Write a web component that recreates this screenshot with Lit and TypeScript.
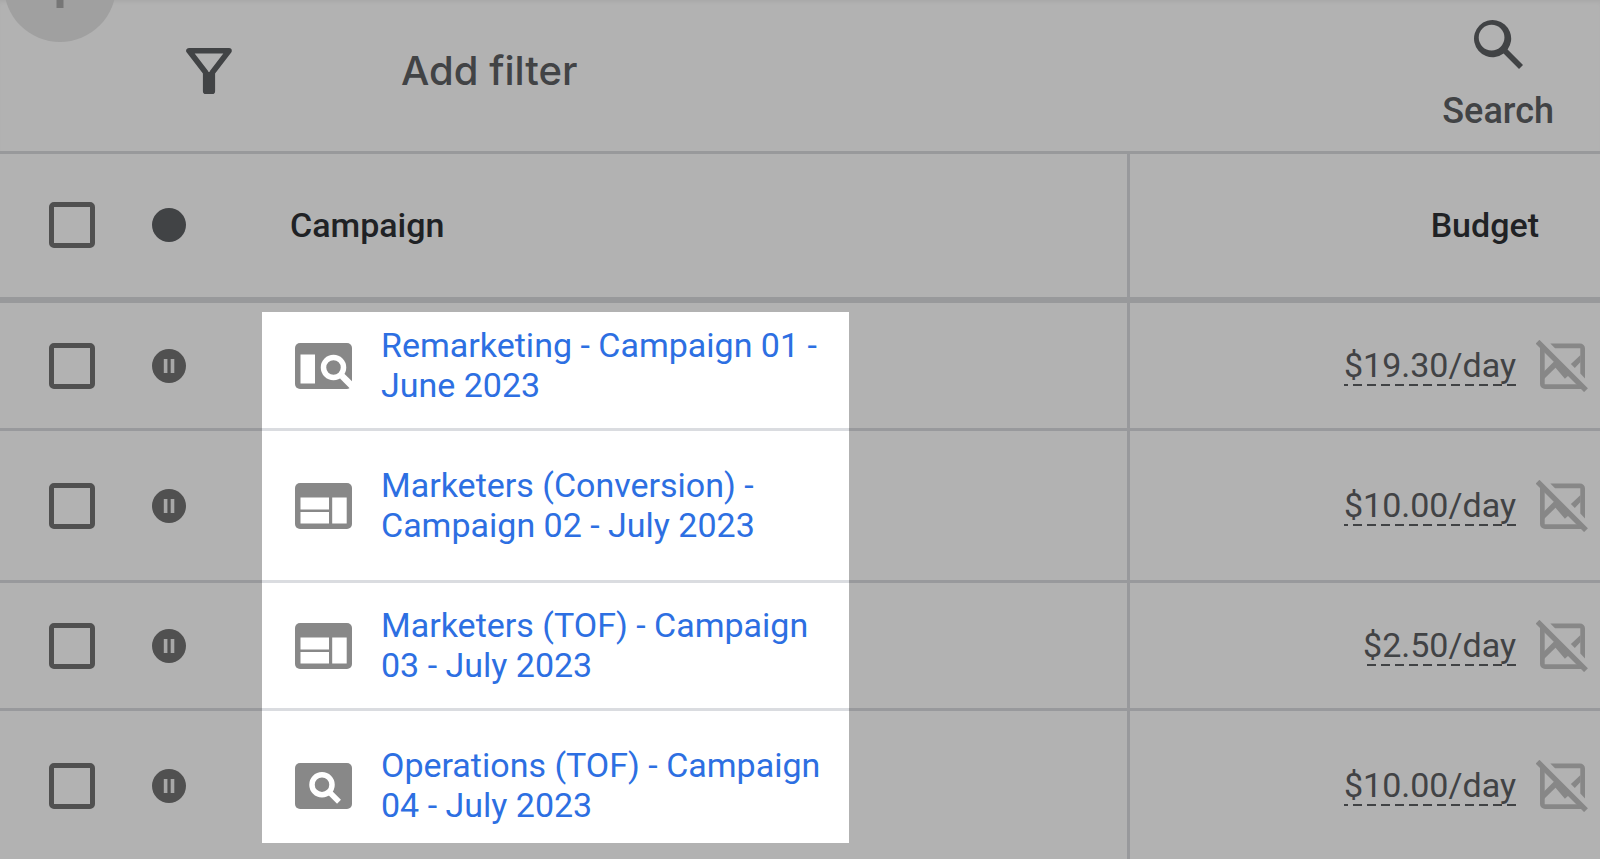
import { LitElement, html, css, svg } from "lit";
import { customElement, state } from "lit/decorators.js";
import { classMap } from "lit/directives/class-map.js";

type Kind = "audience" | "display" | "search";

interface Campaign {
  name: string;
  kind: Kind;
  budget: string;
  roomy: boolean;
}

const CAMPAIGNS: Campaign[] = [
  { name: "Remarketing - Campaign 01 - June 2023", kind: "audience", budget: "$19.30/day", roomy: false },
  { name: "Marketers (Conversion) - Campaign 02 - July 2023", kind: "display", budget: "$10.00/day", roomy: true },
  { name: "Marketers (TOF) - Campaign 03 - July 2023", kind: "display", budget: "$2.50/day", roomy: false },
  { name: "Operations (TOF) - Campaign 04 - July 2023", kind: "search", budget: "$10.00/day", roomy: true },
];

const KIND_ART = {
  audience: svg`
    <rect x="5.5" y="11.5" width="14.5" height="29" fill="#fff"/>
    <circle cx="38.5" cy="24.5" r="10" fill="none" stroke="#fff" stroke-width="5.5"/>
    <path d="M49.3 30.8 57 38.3V46h-1.6L45 35.6z" fill="#fff"/>`,
  display: svg`
    <path d="M5.5 14.6H34v11.8H5.5zM5.5 29H34v11.5H5.5zM37.2 14.6h14.5v25.9H37.2z" fill="#fff"/>`,
  search: svg`
    <circle cx="27" cy="21.7" r="10" fill="none" stroke="#fff" stroke-width="5.5"/>
    <path d="M34.5 29.2 44 38.7" stroke="#fff" stroke-width="5.5"/>`,
};

@customElement("app-root")
export class AppRoot extends LitElement {
  @state() private selected = new Set<number>();

  static styles = css`
    :host {
      display: block;
      position: relative;
      height: 100vh;
      overflow: hidden;
      background: #fff;
      color: #5e6064;
      font-family: Roboto, sans-serif;
      font-size: 34px;
      line-height: 40px;
    }
    button {
      border: 0;
      padding: 0;
      background: none;
      color: inherit;
      font: inherit;
      cursor: pointer;
    }
    svg {
      display: block;
    }
    .toolbar {
      display: flex;
      align-items: center;
      box-sizing: border-box;
      height: 154px;
      padding: 0 46px 10px 186px;
      border-bottom: 3px solid #dadcde;
      box-shadow: inset 0 4px 4px -2px rgba(0, 0, 0, 0.06);
    }
    .filter-field {
      margin-left: 169px;
      font-family: Inter, Roboto, sans-serif;
      font-size: 40px;
      font-weight: 500;
    }
    .search {
      display: flex;
      flex-direction: column;
      align-items: center;
      gap: 22px;
      padding-top: 8px;
      margin-left: auto;
      font-size: 36px;
      font-weight: 500;
    }
    .create {
      position: absolute;
      top: -70px;
      left: 4px;
      display: grid;
      place-items: center;
      width: 112px;
      height: 112px;
      border-radius: 50%;
      background: #e5e5e5;
      color: #aaa;
    }
    table {
      width: 100%;
      table-layout: fixed;
      border-collapse: separate;
      border-spacing: 0;
    }
    .col-check {
      width: 144px;
    }
    .col-status {
      width: 50px;
    }
    .col-budget {
      width: 473px;
    }
    th,
    td {
      box-sizing: border-box;
      padding: 0;
      border-bottom: 3px solid #dadce0;
      text-align: left;
      vertical-align: middle;
    }
    th {
      height: 149px;
      padding-bottom: 2px;
      border-bottom: 6px solid #dadcde;
      color: #2f3236;
      font-weight: 500;
    }
    td {
      height: 128px;
    }
    .roomy td {
      height: 152px;
    }
    .check {
      display: block;
      appearance: none;
      box-sizing: border-box;
      width: 46px;
      height: 46px;
      margin: 0 auto;
      border: 5px solid #737373;
      border-radius: 5px;
    }
    .check:checked {
      background: #1a73e8;
      border-color: #1a73e8;
    }
    .status svg {
      margin: 0 auto;
    }
    .name-head {
      padding-left: 96px;
    }
    .name {
      display: grid;
      grid-template-columns: 57px minmax(0, 450px);
      align-items: center;
      column-gap: 29px;
      padding-left: 101px;
    }
    .name a {
      padding-bottom: 2px;
      color: #2d6fe2;
      text-decoration: none;
    }
    .budget-cell {
      border-left: 3px solid #dadce0;
    }
    .budget-head {
      padding-right: 61px;
      text-align: right;
    }
    .budget {
      display: flex;
      align-items: center;
      justify-content: flex-end;
      gap: 20px;
      padding-right: 12px;
    }
    .amount {
      padding-bottom: 2px;
      background: repeating-linear-gradient(to left, #5e6064 0 9px, transparent 9px 14px) bottom 1px left / 100% 2px no-repeat;
    }
    .spotlight {
      position: absolute;
      top: 312px;
      left: 262px;
      width: 587px;
      height: 531px;
      box-shadow: 0 0 0 4000px rgba(0, 0, 0, 0.3);
      pointer-events: none;
    }
  `;

  private toggle(index: number) {
    const next = new Set(this.selected);
    next.has(index) ? next.delete(index) : next.add(index);
    this.selected = next;
  }

  private toggleAll() {
    this.selected = this.selected.size === CAMPAIGNS.length ? new Set() : new Set(CAMPAIGNS.keys());
  }

  private renderRow(c: Campaign, i: number) {
    return html`
      <tr class=${classMap({ roomy: c.roomy })}>
        <td>
          <input class="check" type="checkbox" aria-label="Select ${c.name}"
            .checked=${this.selected.has(i)} @change=${() => this.toggle(i)} />
        </td>
        <td class="status">
          <svg width="34" height="34" viewBox="0 0 34 34" role="img" aria-label="Paused">
            <circle cx="17" cy="17" r="17" fill="#737373"/>
            <path d="M11.8 10h3.6v14h-3.6zM18.7 10h3.6v14h-3.6z" fill="#f0f0f0"/>
          </svg>
        </td>
        <td>
          <div class="name">
            <svg width="57" height="46" viewBox="0 0 57 46" aria-hidden="true">
              <rect width="57" height="46" rx="5" fill="#888"/>
              ${KIND_ART[c.kind]}
            </svg>
            <a href="#campaign-${i + 1}">${c.name}</a>
          </div>
        </td>
        <td class="budget-cell">
          <div class="budget">
            <button class="amount">${c.budget}</button>
            <svg width="52" height="52" viewBox="0 0 52 52" fill="#c2c2c2" aria-hidden="true">
              <path d="M1.5 1.7 50 50.2" stroke="#c2c2c2" stroke-width="5.4"/>
              <path d="M14.3 3.5H44a5 5 0 0 1 5 5v30l-4.7-4.9V8.2H19zM4 6l4.7 4.7v33.6h33l4.6 4.6H9a5 5 0 0 1-5-5z"/>
              <path d="M19 20.5 8 31.5V39l11.5-11.2 9.400 10.900 5.600-5zM44.500 15v7l-5.700 6-3.900-3.900z"/>
            </svg>
          </div>
        </td>
      </tr>`;
  }

  render() {
    return html`
      <header class="toolbar">
        <svg width="46" height="46" viewBox="0 0 46 46" aria-hidden="true">
          <path d="M3 2.8h40L26.3 24.5v18.7h-6.6V24.5z" fill="none" stroke="#5e6064" stroke-width="5.6" stroke-linejoin="round"/>
          <path d="M19 24h8v20h-8z" fill="#5e6064"/>
        </svg>
        <button class="filter-field">Add filter</button>
        <button class="search">
          <svg width="50" height="50" viewBox="3 3 17.49 17.49" fill="#5e6064" aria-hidden="true">
            <path d="M20.49 19.1 15.1 13.7A6.5 6.5 0 1 0 13.7 15.1L19.1 20.49zM9.5 14a4.5 4.5 0 1 1 0-9 4.5 4.5 0 0 1 0 9z"/>
          </svg>
          <span>Search</span>
        </button>
      </header>
      <button class="create" aria-label="Create campaign">
        <svg width="44" height="44" viewBox="0 0 44 44" fill="currentColor" aria-hidden="true">
          <path d="M18.5 0h7v18.5H44v7H25.5V44h-7V25.5H0v-7h18.5z"/>
        </svg>
      </button>
      <table>
        <colgroup>
          <col class="col-check" /><col class="col-status" /><col /><col class="col-budget" />
        </colgroup>
        <thead>
          <tr>
            <th>
              <input class="check" type="checkbox" aria-label="Select all campaigns"
                .checked=${this.selected.size === CAMPAIGNS.length} @change=${this.toggleAll} />
            </th>
            <th class="status">
              <svg width="34" height="34" viewBox="0 0 34 34" role="img" aria-label="Status">
                <circle cx="17" cy="17" r="17" fill="#5e6064"/>
              </svg>
            </th>
            <th class="name-head">Campaign</th>
            <th class="budget-cell budget-head">Budget</th>
          </tr>
        </thead>
        <tbody>${CAMPAIGNS.map((c, i) => this.renderRow(c, i))}</tbody>
      </table>
      <div class="spotlight"></div>`;
  }
}
